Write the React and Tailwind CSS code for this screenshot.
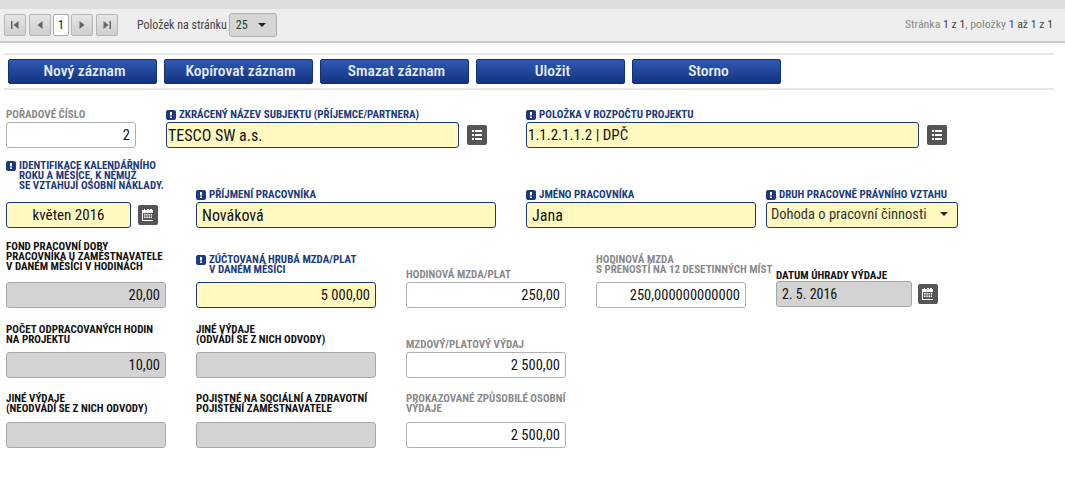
import React from 'react';

const font = "font-['Roboto_Condensed','Roboto',sans-serif] [font-stretch:75%]";

const Bang = () => (
  <svg width="10" height="10" viewBox="0 0 10 10" className="mr-[3px] shrink-0">
    <rect width="10" height="10" rx="2" fill="#1d3a80" />
    <path d="M4 2h2v3.500H4zM4 6.500h2V8H4z" fill="#fff" />
  </svg>
);

const PagerIcon = ({ type }) => (
  <svg width="10" height="10" viewBox="0 0 10 10" fill="#666">
    {type === 'first' && <path d="M1 1h1.500v8H1zM8.500 1v8L3.500 5z" />}
    {type === 'prev' && <path d="M7.500 1v8L2.500 5z" />}
    {type === 'next' && <path d="M2.500 1v8l5-4z" />}
    {type === 'last' && <path d="M1.500 1v8l5-4zM7.500 1H9v8H7.500z" />}
  </svg>
);

const PagerButton = ({ type, className = '' }) => (
  <button className={`flex h-[22px] w-[22px] items-center justify-center rounded-[2px] border border-[#b5b5b5] bg-gradient-to-b from-[#e6e6e6] to-[#cfcfcf] ${className}`}>
    <PagerIcon type={type} />
  </button>
);

const ListIcon = () => (
  <button className="flex h-[20px] w-[20px] items-center justify-center rounded-[2px] bg-[#555]">
    <svg width="12" height="10" viewBox="0 0 12 10" fill="#fff">
      <path d="M1 0h2v2H1zM4 0h7v2H4zM1 4h2v2H1zM4 4h7v2H4zM1 8h2v2H1zM4 8h7v2H4z" />
    </svg>
  </button>
);

const CalendarIcon = () => (
  <button className="flex h-[20px] w-[20px] items-center justify-center rounded-[2px] bg-[#555]">
    <svg width="12" height="12" viewBox="0 0 12 12" fill="#fff">
      <path d="M2 0h1v1h2V0h2v1h1V0h2v1h1v11H0V1h2zM1 4v7h10V4z" />
      <path d="M2 5h1.500v1.500H2zM4.300 5h1.500v1.500H4.300zM6.500 5H8v1.500H6.500zM8.700 5h1.300v1.500H8.700zM2 7.500h1.500V9H2zM4.300 7.500h1.500V9H4.300zM6.500 7.500H8V9H6.500zM8.700 7.500h1.300V9H8.700z" />
    </svg>
  </button>
);

const inputTone = {
  required: 'border-[#1d3a80] bg-[#fff9c0]',
  plain: 'border-[#b0b0b0] bg-white',
  disabled: 'border-[#a8a8a8] bg-[#d3d3d3]',
};

const labelTone = {
  required: 'text-[#1d3a80]',
  plain: 'text-[#8a8a8a]',
  disabled: 'text-[#111]',
};

const textAlign = {
  right: 'text-right pl-[5px] pr-[5px]',
  left: 'text-left pl-[5px] pr-[5px]',
  tight: 'text-left pl-[1px] pr-[5px]',
  center: 'text-center px-[5px]',
};

const Field = ({ label, value = '', tone = 'plain', width, align = 'right', mark, mb = 'mb-[2px]', addon, addonGap = 'ml-[7px]', size = 'text-[14.500px]' }) => (
  <div className={`flex shrink-0 flex-col ${width}`}>
    <div className={`flex items-start text-[11px] font-bold uppercase leading-[10px] ${labelTone[tone]} ${mb}`}>
      {mark && <Bang />}
      <span className="whitespace-pre">{label}</span>
    </div>
    <div className="flex items-center">
      <input
        readOnly
        value={value}
        className={`h-[26px] min-w-0 flex-1 rounded-[3px] border text-[#111] outline-none ${size} ${inputTone[tone]} ${textAlign[align]} ${font}`}
      />
      {addon && <div className={addonGap}>{addon}</div>}
    </div>
  </div>
);

const ActionButton = ({ children }) => (
  <button className="h-[25px] w-[149px] rounded-[2px] border border-[#12306f] bg-gradient-to-b from-[#2e5ab8] to-[#15327f] pl-[4px] text-[15.500px] font-medium text-[#e8f0ff]">
    {children}
  </button>
);

const App = () => {
  return (
    <div className={`min-h-[482px] w-[1065px] bg-white ${font}`}>
      <div className="h-[9px] bg-[#ddd]" />
      <div className="flex h-[34px] items-center border-b-2 border-[#ccc] bg-[#eee] pl-[4px] pr-[12px]">
        <PagerButton type="first" />
        <PagerButton type="prev" className="ml-[3px]" />
        <span className="mx-[2px] flex h-[22px] w-[16px] items-center justify-center rounded-[2px] border border-[#aaa] bg-white text-[13px] text-[#222]">1</span>
        <PagerButton type="next" />
        <PagerButton type="last" className="ml-[3px]" />
        <span className="ml-[19px] text-[12px] text-[#444]">Položek na stránku</span>
        <div className="ml-[2px] flex h-[24px] w-[48px] items-center justify-between rounded-[3px] border border-[#b0b0b0] bg-[#d6d6d6] pl-[6px] pr-[10px] text-[12px] text-[#333]">
          25
          <span className="h-0 w-0 border-x-[4px] border-t-[4px] border-x-transparent border-t-[#222]" />
        </div>
        <span className="ml-auto text-[11.800px] text-[#888]">
          Stránka <b className="font-normal text-[#444]">1 z 1</b>, položky <b className="font-normal text-[#444]">1 až 1 z 1</b>
        </span>
      </div>

      <div className="mx-[4px] mt-[10px] w-[1050px] border-y-2 border-[#e8e8e8] py-[4px]">
        <div className="flex gap-[7px] pl-[4px]">
          <ActionButton>Nový záznam</ActionButton>
          <ActionButton>Kopírovat záznam</ActionButton>
          <ActionButton>Smazat záznam</ActionButton>
          <ActionButton>Uložit</ActionButton>
          <ActionButton>Storno</ActionButton>
        </div>
      </div>

      <div className="flex flex-col px-[6px] pt-[20px]">
        <div className="flex items-end">
          <Field label="Pořadové číslo" value="2" width="w-[130px]" />
          <Field label="Zkrácený název subjektu (příjemce/partnera)" value="TESCO SW a.s." tone="required" align="tight" size="text-[16px]" mark width="ml-[30px] w-[321px]" addon={<ListIcon />} addonGap="ml-[8px]" />
          <Field label="Položka v rozpočtu projektu" value="1.1.2.1.1.2 | DPČ" tone="required" align="tight" size="text-[15px]" mark width="ml-[39px] w-[421px]" addon={<ListIcon />} addonGap="ml-[8px]" />
        </div>

        <div className="mt-[13px] flex items-end">
          <Field label={'Identifikace kalendářního\nroku a měsíce, k němuž\nse vztahují osobní náklady.'} value="květen 2016" tone="required" mark align="center" size="text-[15px]" mb="mb-[11px]" width="w-[152px]" addon={<CalendarIcon />} />
          <Field label="Příjmení pracovníka" value="Nováková" tone="required" align="left" size="text-[16px]" mark width="ml-[38px] w-[300px]" />
          <Field label="Jméno pracovníka" value="Jana" tone="required" align="left" size="text-[16px]" mark width="ml-[30px] w-[230px]" />
          <div className="ml-[10px] flex w-[192px] flex-col">
            <div className="mb-[2px] flex items-start text-[11px] font-bold uppercase leading-[10px] text-[#1d3a80]">
              <Bang />
              <span>Druh pracovně právního vztahu</span>
            </div>
            <div className="flex h-[26px] items-center justify-between whitespace-nowrap rounded-[3px] border border-[#1d3a80] bg-[#fff9c0] pl-[4px] pr-[9px] text-[14.500px] text-[#333]">
              Dohoda o pracovní činnosti
              <span className="mb-[3px] h-0 w-0 border-x-[4px] border-t-[4px] border-x-transparent border-t-[#222]" />
            </div>
          </div>
        </div>

        <div className="mt-[14px] flex items-end gap-[30px]">
          <Field label={'Fond pracovní doby\npracovníka u zaměstnavatele\nv daném měsíci v hodinách'} value="20,00" tone="disabled" mb="mb-[10px]" width="w-[160px]" />
          <Field label={'Zúčtovaná hrubá mzda/plat\nv daném měsíci'} value="5 000,00" tone="required" mark mb="mb-[7px]" width="w-[180px]" />
          <Field label="Hodinová mzda/plat" value="250,00" width="w-[160px]" />
          <Field label={'Hodinová mzda\ns přeností na 12 desetinných míst'} value="250,000000000000" mb="mb-[7px]" width="w-[150px]" />
          <div className="mb-[1px] w-[162px]">
            <Field label="Datum úhrady výdaje" value="2. 5. 2016" tone="disabled" align="left" size="text-[14px]" mb="mb-0" width="w-[162px]" addon={<CalendarIcon />} addonGap="ml-[6px]" />
          </div>
        </div>

        <div className="mt-[17px] flex items-end gap-[30px]">
          <Field label={'Počet odpracovaných hodin\nna projektu'} value="10,00" tone="disabled" mb="mb-[7px]" width="w-[160px]" />
          <Field label={'Jiné výdaje\n(odvádí se z nich odvody)'} value="" tone="disabled" mb="mb-[7px]" width="w-[180px]" />
          <Field label="Mzdový/platový výdaj" value="2 500,00" width="w-[160px]" />
        </div>

        <div className="mt-[16px] flex items-end gap-[30px]">
          <Field label={'Jiné výdaje\n(neodvádí se z nich odvody)'} value="" tone="disabled" mb="mb-[8px]" width="w-[160px]" />
          <Field label={'Pojistné na sociální a zdravotní\npojištění zaměstnavatele'} value="" tone="disabled" mb="mb-[8px]" width="w-[180px]" />
          <Field label={'Prokazované způsobilé osobní\nvýdaje'} value="2 500,00" mb="mb-[8px]" width="w-[160px]" />
        </div>
      </div>
    </div>
  );
};

export default App;
